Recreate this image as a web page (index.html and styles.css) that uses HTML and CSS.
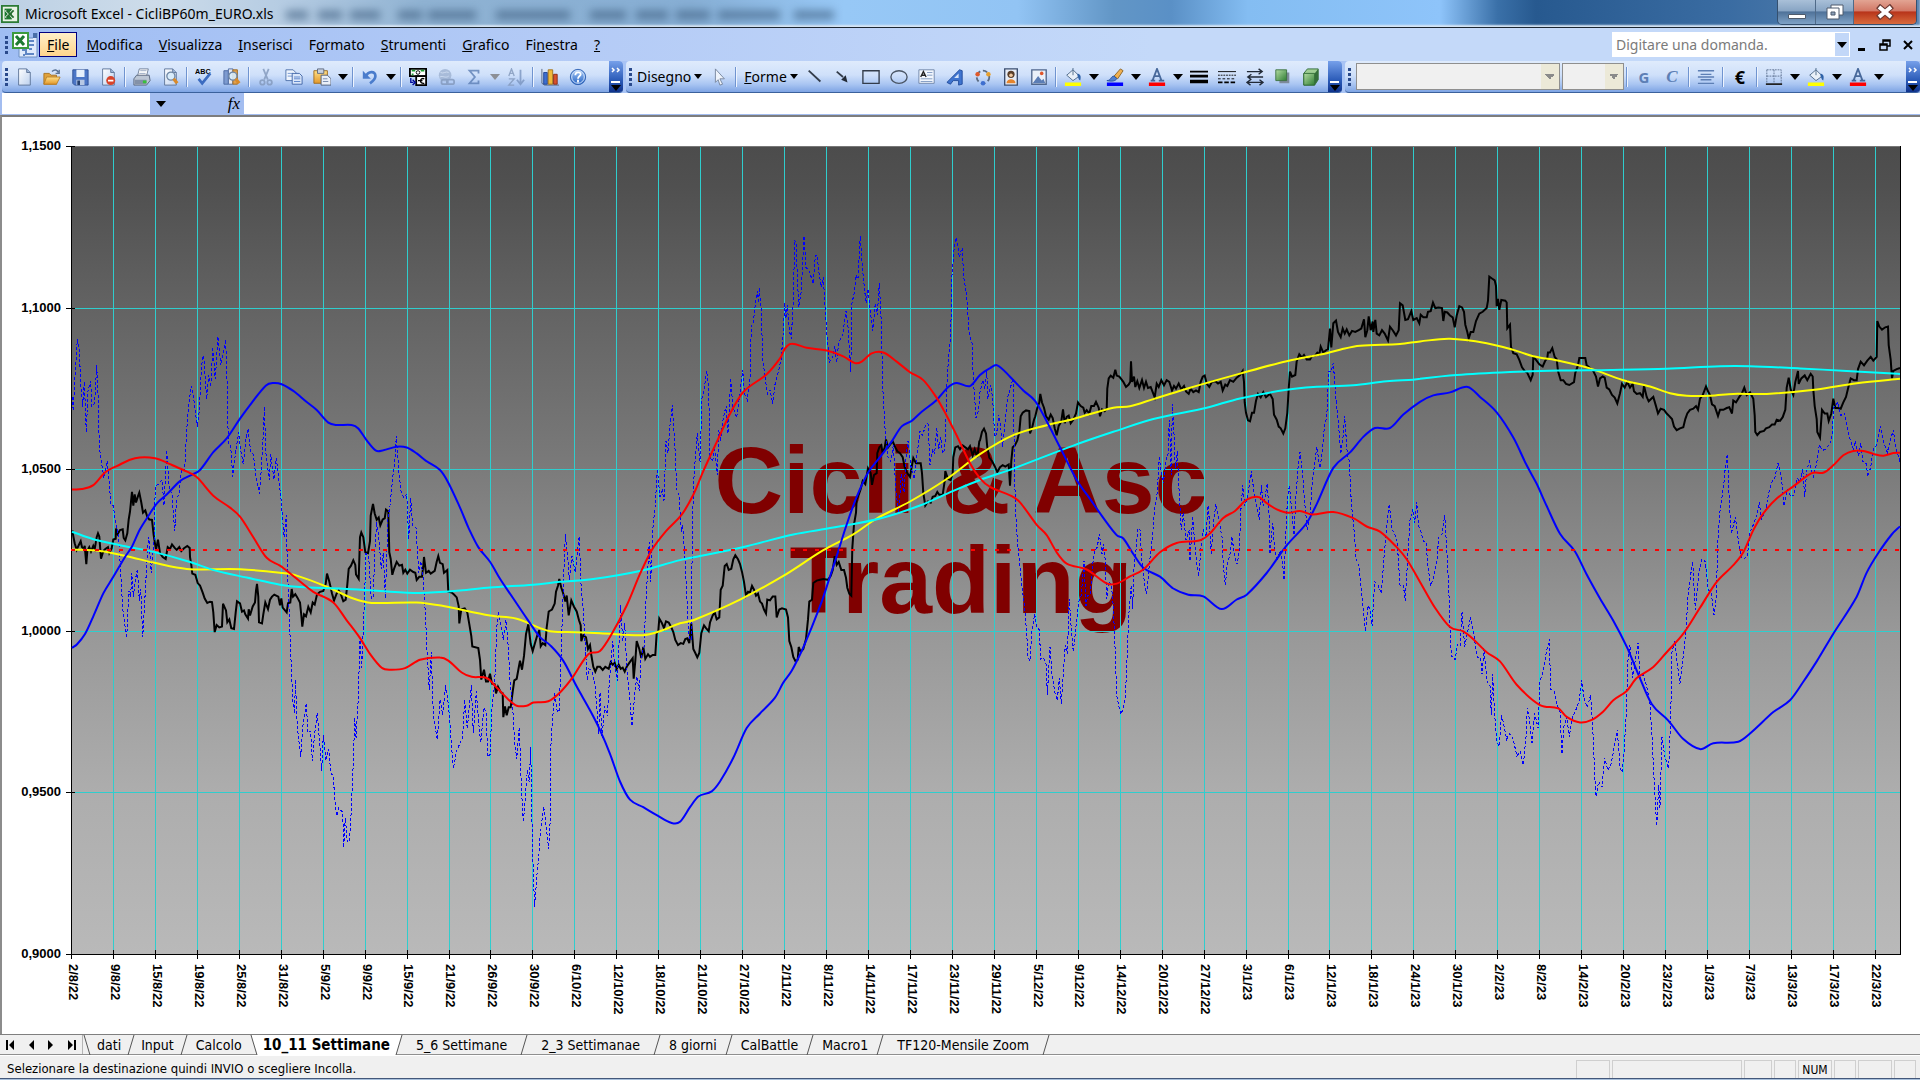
FILE: index.html
```html
<!DOCTYPE html>
<html lang="it">
<head>
<meta charset="utf-8">
<title>Microsoft Excel - CicliBP60m_EURO.xls</title>
<link rel="stylesheet" href="styles.css">
</head>
<body>
<svg class="defs" aria-hidden="true">
  <defs>
    <linearGradient id="g-page" x1="0" y1="0" x2="1" y2="1"><stop offset="0" stop-color="#fff"/><stop offset="1" stop-color="#bcd0ee"/></linearGradient>
    <linearGradient id="g-green" x1="0" y1="0" x2="1" y2="1"><stop offset="0" stop-color="#b4dda4"/><stop offset="1" stop-color="#2f7d33"/></linearGradient>
    <linearGradient id="g-help" x1="0" y1="0" x2="0" y2="1"><stop offset="0" stop-color="#a9cbf7"/><stop offset="1" stop-color="#2261c4"/></linearGradient>
    <linearGradient id="g-gold" x1="0" y1="0" x2="0" y2="1"><stop offset="0" stop-color="#ffdf86"/><stop offset="1" stop-color="#e3982a"/></linearGradient>
    <symbol id="i-drop" viewBox="0 0 10 6"><path d="M0 0h10L5 6z" fill="currentColor"/></symbol>
    <symbol id="i-page" viewBox="0 0 20 20"><path d="M4 1h9l4 4v14H4z" fill="url(#g-page)" stroke="#5b7396"/><path d="M13 1v4h4" fill="#9db6da" stroke="#5b7396"/></symbol>
    <symbol id="i-lens" viewBox="0 0 20 20"><circle cx="11" cy="9" r="4.5" fill="#d8ecfb" fill-opacity=".9" stroke="#6f87a5" stroke-width="1.5"/><path d="m14 12 4 5" stroke="#d98a2a" stroke-width="3.5"/></symbol>
    <symbol id="i-bucket" viewBox="0 0 20 20"><path d="m3 8 7-6 7 7-7 5z" fill="#e9f0f8" stroke="#4b6686"/><path d="M10 2V0M10 2v6" stroke="#4b6686"/><path d="M15 6c4 1 4 4 3 8-2-1-2-3-3-5z" fill="#2f62a8"/><path d="M1 16h18v4H1z" fill="#ff0"/></symbol>
    <symbol id="i-fontcolor" viewBox="0 0 20 20"><path d="M5 14 10 1l5 13M7 9h6M3 14h5M12 14h6" fill="none" stroke="#47689a" stroke-width="2"/><path d="M1 16h18v4H1z" fill="red"/></symbol>
  </defs>
</svg>

<div class="window">
  <header class="titlebar">
    <svg class="app-icon" viewBox="0 0 20 20"><path d="M1 1h18v18H1z" fill="#e9f3e6" stroke="#2b7a35" stroke-width="2"/><path d="M4 4h8v12H4z" fill="#1c7a30"/><path d="m5 6 8 8M13 6l-8 8" stroke="#fff" stroke-width="2"/><path d="m6 6 8 8M14 6l-8 8" stroke="#236b2e" stroke-width="2"/></svg>
    <h1 class="title">Microsoft Excel - CicliBP60m_EURO.xls</h1>
    <svg class="glass-marks" viewBox="0 0 560 28" aria-hidden="true"><path d="M0 15h22M32 15h24M64 15h30M112 15h24M142 15h48M210 15h74M304 15h36M350 15h32M390 15h34M432 15h62M508 15h40" stroke="#3a5a7c" stroke-width="9"/></svg>
    <div class="win-buttons">
      <button class="win" aria-label="Riduci a icona"><svg viewBox="0 0 20 16"><path d="M1.500 10.500h17v4h-17z" fill="#fff" stroke="#4e5b6c"/></svg></button>
      <button class="win" aria-label="Ripristino"><svg viewBox="0 0 20 16"><path d="M6 1h12v10H6z" fill="#fff" stroke="#4e5b6c"/><path d="M2 4h12v11H2z" fill="#fff" stroke="#4e5b6c"/><path d="M6 8h4v3H6z" fill="#8ba0b8" stroke="#4e5b6c"/></svg></button>
      <button class="win win-close" aria-label="Chiudi"><svg viewBox="0 0 20 16"><path d="m3 2 14 12M17 2 3 14" stroke="#6b3a33" stroke-width="6"/><path d="m4 3 12 10M16 3 4 13" stroke="#fff" stroke-width="4"/></svg></button>
    </div>
  </header>

  <nav class="menubar">
    <span class="grip"></span>
    <svg class="doc-icon" viewBox="0 0 26 26"><path d="M7 6h14l4-5v24H7z" fill="#dfeafb" stroke="#6d8fc0"/><path d="M10 18h4v4h8M12 22v2M17 9h5M17 13h5M17 17h3" stroke="#5f86c4" stroke-width="2" fill="none"/><path d="M21 1h4v5h-4z" fill="#4a6fa8"/><path d="M1 1h15v15H1z" fill="#fff" stroke="#3c9a3e" stroke-width="2"/><path d="m4 4 8 9M12 4l-8 9" stroke="#1f7a33" stroke-width="3"/></svg>
    <button class="menu menu-on"><u>F</u>ile</button>
    <button class="menu"><u>M</u>odifica</button>
    <button class="menu"><u>V</u>isualizza</button>
    <button class="menu"><u>I</u>nserisci</button>
    <button class="menu">F<u>o</u>rmato</button>
    <button class="menu"><u>S</u>trumenti</button>
    <button class="menu"><u>G</u>rafico</button>
    <button class="menu">Fi<u>n</u>estra</button>
    <button class="menu"><u>?</u></button>
    <div class="ask"><input class="ask-input" type="text" placeholder="Digitare una domanda." aria-label="Digitare una domanda"><button class="ask-drop" aria-label="Domande recenti"><svg><use href="#i-drop"/></svg></button></div>
    <button class="mdi" aria-label="Riduci"><svg viewBox="0 0 12 12"><path d="M2 9h7v3H2z"/></svg></button>
    <button class="mdi" aria-label="Ripristina"><svg viewBox="0 0 12 12"><path d="M4 5V1h7v6H8M4 2h7M1 5h7v6H1zM1 6h7" fill="none" stroke="#000" stroke-width="1.500"/></svg></button>
    <button class="mdi" aria-label="Chiudi cartella"><svg viewBox="0 0 12 12"><path d="m2 2 8 8M10 2l-8 8" stroke="#000" stroke-width="2"/></svg></button>
  </nav>

  <div class="toolbars">
    <div class="toolbar tb-standard">
      <span class="grip"></span>
      <button class="tool" aria-label="Nuovo"><svg viewBox="0 0 20 20"><use href="#i-page"/></svg></button>
      <button class="tool" aria-label="Apri"><svg viewBox="0 0 20 20"><path d="M1 6h6l2 2h6v10H1z" fill="#e0a23c" stroke="#a8701c"/><path d="M4 10h15l-4 8H1z" fill="url(#g-gold)" stroke="#b8802a"/><path d="M10 4c3-3 6-2 7 1M18 2v4h-4" fill="none" stroke="#5b7396" stroke-width="1.500"/></svg></button>
      <button class="tool" aria-label="Salva"><svg viewBox="0 0 20 20"><path d="M2 2h17v17H4l-2-2z" fill="#4c76c6" stroke="#2e4f94"/><path d="M6 2h9v8H6z" fill="#e6effb"/><path d="M6 13h9v6H6z" fill="#b7c8e4"/><path d="M7 14h3v5H7z" fill="#26406f"/></svg></button>
      <button class="tool" aria-label="Autorizzazione"><svg viewBox="0 0 20 20"><use href="#i-page"/><circle cx="13" cy="14" r="5" fill="#d8432a"/><path d="M10 14h6" stroke="#fff" stroke-width="2"/></svg></button>
      <span class="sep"></span>
      <button class="tool" aria-label="Stampa"><svg viewBox="0 0 20 20"><path d="M7 1h10l-2 8H5z" fill="#fff" stroke="#6c7c93"/><path d="m8 3h7M7 6h7" stroke="#93a4bd"/><path d="M4 8h14l1 6-4 5H1v-7z" fill="#bcc6d4" stroke="#56637a"/><path d="M2 13h13v5H2z" fill="#8391a8"/><path d="M11 14h4v3h-4z" fill="#38c23a"/></svg></button>
      <button class="tool" aria-label="Anteprima di stampa"><svg viewBox="0 0 20 20"><use href="#i-page"/><use href="#i-lens"/></svg></button>
      <span class="sep"></span>
      <button class="tool" aria-label="Controllo ortografia"><svg viewBox="0 0 20 20"><text x="0" y="7" class="abc">ABC</text><path d="m4 12 4 5 9-11" fill="none" stroke="#3c6cc0" stroke-width="3"/></svg></button>
      <button class="tool" aria-label="Ricerche"><svg viewBox="0 0 20 20"><path d="M1 3h5v15H1z" fill="#7d9bd0" stroke="#4a68a0"/><path d="M6 1h5v17H6z" fill="#e6e9f2" stroke="#4a68a0"/><path d="M11 2h5v16h-5z" fill="#e2a04a" stroke="#9a6a24"/><use href="#i-lens"/></svg></button>
      <span class="sep"></span>
      <button class="tool off" aria-label="Taglia"><svg viewBox="0 0 20 20"><path d="m7 1 5 12M13 1 8 13" stroke="#8298bb" stroke-width="2"/><circle cx="6" cy="16" r="2.500" fill="none" stroke="#8298bb" stroke-width="2"/><circle cx="14" cy="16" r="2.500" fill="none" stroke="#8298bb" stroke-width="2"/></svg></button>
      <button class="tool" aria-label="Copia"><svg viewBox="0 0 20 20"><path d="M1 2h8l3 3v9H1z" fill="#eef4fd" stroke="#4b6ea9"/><path d="M3 6h6M3 9h6" stroke="#6f93cf"/><path d="M8 6h8l3 3v9H8z" fill="#dbe7fa" stroke="#3c62a5"/><path d="M10 10h7M10 12h7M10 15h7" stroke="#5680c8"/></svg></button>
      <button class="tool" aria-label="Incolla"><svg viewBox="0 0 20 20"><path d="M1 3h15v14H1z" fill="url(#g-gold)" stroke="#9c6a1e"/><path d="M5 1h7v5H5z" fill="#c7d0de" stroke="#5c687c"/><path d="M9 8h7l4 4v7H9z" fill="#e9eff8" stroke="#4c5c78"/><path d="M11 12h5M11 15h6" stroke="#7085a8"/></svg></button>
      <button class="tool-drop" aria-label="Opzioni incolla"><svg><use href="#i-drop"/></svg></button>
      <span class="sep"></span>
      <button class="tool" aria-label="Annulla"><svg viewBox="0 0 20 20"><path d="M5 10C8 3 16 3 16 9c0 4-3 6-6 8" fill="none" stroke="#4a7ccc" stroke-width="3"/><path d="M2 3v9h9z" fill="#4a7ccc"/></svg></button>
      <button class="tool-drop" aria-label="Elenco annulla"><svg><use href="#i-drop"/></svg></button>
      <span class="sep"></span>
      <button class="tool" aria-label="Conversione in euro"><svg viewBox="0 0 20 20"><path d="M1 1h18v8H1z" fill="#fff" stroke="#000" stroke-width="2"/><path d="M3 3h4M13 3h4M3 7h2" stroke="#1d9a32" stroke-width="2"/><circle cx="10" cy="5" r="2" fill="none" stroke="#000"/><path d="M8 9h11v10H8z" fill="#fff" stroke="#000" stroke-width="2"/><path d="M17 12c-5-2-6 6 0 5M10 14h5" fill="none" stroke="#000" stroke-width="1.500"/><path d="M2 11v5h3M4 13l3 3-3 3" fill="none" stroke="#000a9a" stroke-width="1.500"/></svg></button>
      <button class="tool off" aria-label="Collegamento ipertestuale"><svg viewBox="0 0 20 20"><circle cx="9" cy="8" r="7" fill="#9fb3d2"/><path d="M4 5c3 2 6-2 9 0M3 10c4-2 6 2 10-1" stroke="#cfdcf0" fill="none"/><rect x="5" y="13" width="7" height="5" rx="2" fill="none" stroke="#8298bb" stroke-width="2"/><rect x="11" y="13" width="8" height="5" rx="2" fill="none" stroke="#8298bb" stroke-width="2"/></svg></button>
      <button class="tool off" aria-label="Somma automatica"><svg viewBox="0 0 20 20"><path d="M15 6V3H5l6 7-6 7h10v-3" fill="none" stroke="#5d7fb5" stroke-width="2"/></svg></button>
      <button class="tool-drop off-drop" aria-label="Altre funzioni"><svg><use href="#i-drop"/></svg></button>
      <button class="tool off" aria-label="Ordinamento crescente"><svg viewBox="0 0 20 20"><path d="m2 9 3-8 3 8M3 6h4M2 12h6l-6 7h6" fill="none" stroke="#8298bb" stroke-width="1.500"/><path d="M15 2v15M11 13l4 5 4-5" fill="none" stroke="#7b95c0" stroke-width="2"/></svg></button>
      <span class="sep"></span>
      <button class="tool" aria-label="Creazione guidata Grafico"><svg viewBox="0 0 20 20"><path d="M1 1v16l3 2h16" fill="none" stroke="#56637a"/><path d="M3 5h4v13H3z" fill="#3e6fd0" stroke="#1f4594"/><path d="M8 2h5v16H8z" fill="#f0b93a" stroke="#a0701a"/><path d="M14 7h4v11h-4z" fill="#d8512c" stroke="#8a2a14"/></svg></button>
      <button class="tool" aria-label="Guida"><svg viewBox="0 0 20 20"><circle cx="10" cy="10" r="8.500" fill="url(#g-help)" stroke="#2a5db0"/><circle cx="10" cy="10" r="7" fill="none" stroke="#dbe9fc"/><path d="M7 8c0-4 6-4 6-1 0 2-3 2-3 5M10 13v3" fill="none" stroke="#fff" stroke-width="2"/></svg></button>
      <button class="more" aria-label="Opzioni barra degli strumenti standard"><svg viewBox="0 0 14 30"><path d="m3 6 2 2-2 2M8 6l2 2-2 2" fill="none" stroke="#fff" stroke-width="1.500"/><path d="M2 20h9" stroke="#fff" stroke-width="2"/><path d="M2 23h10l-5 6z" fill="#000"/></svg></button>
    </div>
    <div class="toolbar tb-drawing">
      <span class="grip"></span>
      <button class="tool-text"><span>Dise<u>g</u>no</span><svg><use href="#i-drop"/></svg></button>
      <button class="tool" aria-label="Seleziona oggetti"><svg viewBox="0 0 20 20"><path d="m6 1 10 11h-5l3 6-3 1-2-6-3 3z" fill="#eef3fb" stroke="#74839b"/></svg></button>
      <span class="sep"></span>
      <button class="tool-text"><span><u>F</u>orme</span><svg><use href="#i-drop"/></svg></button>
      <button class="tool" aria-label="Linea"><svg viewBox="0 0 20 20"><path d="m3 3 13 12" stroke="#333c4a" stroke-width="2"/></svg></button>
      <button class="tool" aria-label="Freccia"><svg viewBox="0 0 20 20"><path d="m3 4 7 6" stroke="#333c4a" stroke-width="2"/><path d="m15 16-2-8-5 5z" fill="#222a36"/></svg></button>
      <button class="tool" aria-label="Rettangolo"><svg viewBox="0 0 20 20"><path d="M1 3h18v14H1z" fill="none" stroke="#333c4a" stroke-width="1.500"/></svg></button>
      <button class="tool" aria-label="Ovale"><svg viewBox="0 0 20 20"><ellipse cx="10" cy="10" rx="9" ry="7" fill="none" stroke="#4a5565" stroke-width="1.500"/></svg></button>
      <button class="tool" aria-label="Casella di testo"><svg viewBox="0 0 20 20"><path d="M1 2h17v15H1z" fill="#f1f6fd" stroke="#6d83a6"/><path d="m3 10 3-6 3 6M4 8h4" fill="none" stroke="#222" stroke-width="1.500"/><path d="M10 5h6M10 8h6M3 12h13M3 15h13" stroke="#7d97c0"/></svg></button>
      <button class="tool" aria-label="WordArt"><svg viewBox="0 0 20 20"><path d="M1 16 15 2l3 1v15l-4 1v-5H8l-3 4z" fill="#3f74cf" stroke="#1f4a9a"/><path d="M9 11h5V6z" fill="#d5e3f8"/></svg></button>
      <button class="tool" aria-label="Diagramma"><svg viewBox="0 0 20 20"><circle cx="10" cy="10" r="7" fill="none" stroke="#5b6b82" stroke-width="2" stroke-dasharray="5 3"/><circle cx="4" cy="7" r="2.500" fill="#e05a2b"/><circle cx="16" cy="7" r="2.500" fill="#e7a02e"/><circle cx="10" cy="17" r="2.500" fill="#3e6fd0"/></svg></button>
      <button class="tool" aria-label="ClipArt"><svg viewBox="0 0 20 20"><path d="M3 1h14v18H3z" fill="#e6ecf6" stroke="#3c4f70" stroke-width="1.500"/><circle cx="10" cy="7" r="4" fill="#5a3f2a"/><circle cx="10" cy="8" r="2" fill="#f0c9a0"/><path d="M5 17c0-6 10-6 10 0z" fill="#e6842b"/></svg></button>
      <button class="tool" aria-label="Immagine"><svg viewBox="0 0 20 20"><path d="M2 2h16v16H2z" fill="#eaf0f9" stroke="#4f668c" stroke-width="1.500"/><circle cx="13" cy="6" r="2" fill="#e0562b"/><path d="m3 17 6-8 4 5 2-2 2 5z" fill="#5b7db5"/></svg></button>
      <span class="sep"></span>
      <button class="tool" aria-label="Colore riempimento"><svg viewBox="0 0 20 20"><use href="#i-bucket"/></svg></button>
      <button class="tool-drop" aria-label="Altri colori riempimento"><svg><use href="#i-drop"/></svg></button>
      <button class="tool" aria-label="Colore linea"><svg viewBox="0 0 20 20"><path d="m9 9 7-8 3 2-6 9z" fill="#f0b050" stroke="#8a6224"/><path d="M1 14c5 0 4-5 8-5l3 3c-2 3-6 3-11 2z" fill="#4f7fd0" stroke="#2a529c"/><path d="M1 16h18v4H1z" fill="#00f"/></svg></button>
      <button class="tool-drop" aria-label="Altri colori linea"><svg><use href="#i-drop"/></svg></button>
      <button class="tool" aria-label="Colore carattere"><svg viewBox="0 0 20 20"><use href="#i-fontcolor"/></svg></button>
      <button class="tool-drop" aria-label="Altri colori carattere"><svg><use href="#i-drop"/></svg></button>
      <button class="tool" aria-label="Stile linea"><svg viewBox="0 0 20 20"><path d="M0 4h20" stroke="#000" stroke-width="2"/><path d="M0 9h20" stroke="#000" stroke-width="3"/><path d="M0 15h20" stroke="#000" stroke-width="4"/></svg></button>
      <button class="tool" aria-label="Stile tratteggio"><svg viewBox="0 0 20 20"><path d="M0 4h20" stroke="#000"/><path d="M0 8h20" stroke="#000" stroke-dasharray="2 1"/><path d="M0 12h20" stroke="#000" stroke-dasharray="3 2"/><path d="M0 16h20" stroke="#000" stroke-width="2" stroke-dasharray="5 2"/></svg></button>
      <button class="tool" aria-label="Stile freccia"><svg viewBox="0 0 20 20"><path d="M1 4h17M14 1l4 3-4 3M2 10h17M6 7l-4 3 4 3M2 16h16M5 13l-4 3 4 3M15 13l4 3-4 3" fill="none" stroke="#222a36" stroke-width="1.500"/></svg></button>
      <button class="tool" aria-label="Stile ombreggiatura"><svg viewBox="0 0 20 20"><path d="M6 5h11v12H6z" fill="#7d8a9b"/><path d="M2 2h12v12H2z" fill="url(#g-green)" stroke="#3b7040"/></svg></button>
      <button class="tool" aria-label="Stile 3D"><svg viewBox="0 0 20 20"><path d="m2 6 4-5h12v12l-4 6H2z" fill="#9fce94" stroke="#2f6b35"/><path d="M14 6l4-5v12l-4 6z" fill="#356f3a"/><path d="M2 6h12v13H2z" fill="url(#g-green)" stroke="#2f6b35"/></svg></button>
      <button class="more" aria-label="Opzioni barra Disegno"><svg viewBox="0 0 14 30"><path d="M2 20h9" stroke="#fff" stroke-width="2"/><path d="M2 23h10l-5 6z" fill="#000"/></svg></button>
    </div>
    <div class="toolbar tb-format">
      <span class="grip"></span>
      <select class="combo combo-font" aria-label="Tipo di carattere" disabled><option></option></select>
      <select class="combo combo-size" aria-label="Dimensione carattere" disabled><option></option></select>
      <span class="sep"></span>
      <button class="tool letter bold">G</button>
      <button class="tool letter italic">C</button>
      <span class="sep"></span>
      <button class="tool" aria-label="Allinea al centro"><svg viewBox="0 0 20 20"><path d="M1 3h18M4 7h12M1 10h18M4 13h12M1 17h18" stroke="#5d7fb5" stroke-width="1.500"/></svg></button>
      <span class="sep"></span>
      <button class="tool letter euro">€</button>
      <span class="sep"></span>
      <button class="tool" aria-label="Bordi"><svg viewBox="0 0 20 20"><path d="M2 2h16v15M2 2v15M10 2v15M2 9h16" fill="none" stroke="#5c6f8e" stroke-dasharray="2 1"/><path d="M1 18h18" stroke="#222" stroke-width="2"/></svg></button>
      <button class="tool-drop" aria-label="Altri bordi"><svg><use href="#i-drop"/></svg></button>
      <button class="tool" aria-label="Riempimento celle"><svg viewBox="0 0 20 20"><use href="#i-bucket"/></svg></button>
      <button class="tool-drop" aria-label="Altri riempimenti"><svg><use href="#i-drop"/></svg></button>
      <button class="tool" aria-label="Colore testo"><svg viewBox="0 0 20 20"><use href="#i-fontcolor"/></svg></button>
      <button class="tool-drop" aria-label="Altri colori testo"><svg><use href="#i-drop"/></svg></button>
      <button class="more" aria-label="Opzioni barra Formattazione"><svg viewBox="0 0 14 30"><path d="m3 6 2 2-2 2M8 6l2 2-2 2" fill="none" stroke="#fff" stroke-width="1.500"/><path d="M2 20h9" stroke="#fff" stroke-width="2"/><path d="M2 23h10l-5 6z" fill="#000"/></svg></button>
    </div>
  </div>

  <div class="formula-bar">
    <input class="name-box" type="text" aria-label="Casella Nome">
    <button class="name-drop" aria-label="Elenco nomi"><svg><use href="#i-drop"/></svg></button>
    <button class="fx"><i>fx</i></button>
    <input class="formula" type="text" aria-label="Barra della formula">
  </div>

  <main class="sheet">
    <ol class="axis-y"><li>1,1500</li><li>1,1000</li><li>1,0500</li><li>1,0000</li><li>0,9500</li><li>0,9000</li></ol>
    <div class="plot"><svg class="plot-lines" id="plot" viewBox="0 0 1829 808" preserveAspectRatio="none" role="img" aria-label="Cicli EURO, 10-11 settimane"></svg></div>
    <ol class="axis-x" id="dates"></ol>
    <p class="watermark">Cicli &amp; Asc<br>Trading</p>
  </main>

  <div class="tabbar">
    <div class="tab-nav">
      <button aria-label="Primo foglio"><svg viewBox="0 0 12 12"><path d="M2 1h2v10H2zM10 1v10L5 6z"/></svg></button>
      <button aria-label="Foglio precedente"><svg viewBox="0 0 12 12"><path d="M9 1v10L4 6z"/></svg></button>
      <button aria-label="Foglio successivo"><svg viewBox="0 0 12 12"><path d="M3 1v10l5-5z"/></svg></button>
      <button aria-label="Ultimo foglio"><svg viewBox="0 0 12 12"><path d="M2 1v10l5-5zM8 1h2v10H8z"/></svg></button>
    </div>
    <svg class="edge" viewBox="0 0 8 20"><path d="m1 0 6 20" stroke="#555" fill="none"/></svg>
    <button class="tab">dati</button>
    <svg class="edge" viewBox="0 0 8 20"><path d="m7 0-6 20" stroke="#555"/></svg>
    <button class="tab">Input</button>
    <svg class="edge" viewBox="0 0 8 20"><path d="m7 0-6 20" stroke="#555"/></svg>
    <button class="tab tab-mid">Calcolo</button>
    <svg class="edge" viewBox="0 0 8 20"><path d="M1 0h7v20H7z" fill="#fff"/><path d="m1 0 6 20" stroke="#555"/></svg>
    <button class="tab tab-on">10_11 Settimane</button>
    <svg class="edge" viewBox="0 0 8 20"><path d="M0 0h7L1 20H0z" fill="#fff"/><path d="m7 0-6 20" stroke="#555"/></svg>
    <button class="tab tab-wide">5_6 Settimane</button>
    <svg class="edge" viewBox="0 0 8 20"><path d="m7 0-6 20" stroke="#555"/></svg>
    <button class="tab tab-wide">2_3 Settimanae</button>
    <svg class="edge" viewBox="0 0 8 20"><path d="m7 0-6 20" stroke="#555"/></svg>
    <button class="tab tab-mid">8 giorni</button>
    <svg class="edge" viewBox="0 0 8 20"><path d="m7 0-6 20" stroke="#555"/></svg>
    <button class="tab tab-mid">CalBattle</button>
    <svg class="edge" viewBox="0 0 8 20"><path d="m7 0-6 20" stroke="#555"/></svg>
    <button class="tab tab-mid">Macro1</button>
    <svg class="edge" viewBox="0 0 8 20"><path d="m7 0-6 20" stroke="#555"/></svg>
    <button class="tab tab-wide">TF120-Mensile Zoom</button>
    <svg class="edge" viewBox="0 0 8 20"><path d="m7 0-6 20" stroke="#555"/></svg>
  </div>

  <footer class="status">
    <span class="status-text">Selezionare la destinazione quindi INVIO o scegliere Incolla.</span>
    <span class="cell cell-m"></span><span class="cell cell-l"></span><span class="cell"></span><span class="cell cell-s"></span><span class="cell cell-m">NUM</span><span class="cell cell-s"></span><span class="cell cell-m"></span><span class="cell cell-s"></span>
  </footer>
  <div class="taskbar"></div>
</div>
<script src="chart.js"></script>
</body>
</html>
```
FILE: styles.css
```css
* { box-sizing: border-box; }
body { margin: 0; font-family: "Noto Sans", "Open Sans", sans-serif; font-size: 14px; color: #000; }
button, input, select { font: inherit; color: inherit; margin: 0; padding: 0; border: 0; background: none; border-radius: 0; }
ol { list-style: none; margin: 0; padding: 0; }
.defs { position: absolute; width: 0; height: 0; }
.window { display: flex; flex-direction: column; min-height: 100vh; background: #f0f0f0; }

.titlebar { display: flex; align-items: center; height: 28px; padding-left: 1px; overflow: hidden; border-bottom: 1px solid #1c2733;
  background: linear-gradient(90deg, #bcd0e4 0, #cddcea 8%, #b4cbe2 15%, #8fb2d2 22%, #86aed4 36%, #97c8f6 44%, #92c4f4 53%, #6296c6 58%, #5a90c6 61%, #84bdf2 65%, #8ec4fa 75%, #3a70a8 78%, #27598f 80%, #3a6ca2 90%, #5d86b2 100%);
  box-shadow: inset 0 -2px 2px #d8e6f4; }
.app-icon { width: 18px; height: 18px; }
.title { margin: 0 0 0 6px; font-size: 14px; font-weight: 400; white-space: nowrap; }
.glass-marks { width: 560px; height: 28px; margin-left: 12px; filter: blur(4px); opacity: .6; }
.win-buttons { display: flex; align-self: flex-start; height: 25px; margin-left: auto; margin-right: 3px; border: 1px solid #35506f; border-top: 0; border-radius: 0 0 5px 5px; overflow: hidden; }
.win { width: 38px; border-right: 1px solid #4f6a88; background: linear-gradient(#a9c0d8 0, #88a5c4 45%, #4f7299 50%, #7fa2c6 100%); }
.win svg { width: 20px; height: 16px; display: block; margin: auto; }
.win-close { width: 62px; border-right: 0; background: linear-gradient(#e2a493 0, #d27866 45%, #b8341a 50%, #d86a3c 100%); }

.menubar { display: flex; align-items: center; height: 33px; padding-left: 5px; background: linear-gradient(90deg, #9fbdf3, #b4cbf6 30%, #c4d9f9 60%); }
.grip { flex: none; width: 3px; height: 18px; background: repeating-linear-gradient(#2a4a8c 0 3px, transparent 3px 5px); }
.doc-icon { width: 26px; height: 26px; margin: 0 1px 0 4px; }
.menu { height: 25px; padding: 0 7px; line-height: 23px; border: 1px solid transparent; }
.menu-on { margin-right: 1px; border-color: #000080; background: linear-gradient(#ffefc8, #ffd58c); }
.ask { display: flex; width: 238px; height: 25px; margin-left: auto; background: #fff; }
.ask-input { flex: 1; min-width: 0; padding: 0 4px; }
.ask-input::placeholder { color: #7b7b7b; opacity: 1; }
.ask-drop { width: 16px; background: #c2d7f8; border: 1px solid #fff; }
.ask-drop svg, .name-drop svg, .tool-drop svg, .tool-text svg { width: 10px; height: 6px; display: block; margin: auto; }
.tool-text svg { width: 8px; height: 5px; }
.mdi { width: 23px; height: 24px; }
.mdi svg { width: 12px; height: 12px; display: block; margin: auto; }
.mdi:last-child { margin-right: 1px; }

.toolbars { display: flex; gap: 3px; height: 32px; padding-left: 2px; background: #a9c4f5; }
.toolbar { display: flex; align-items: center; height: 32px; padding-left: 3px; border-radius: 4px; overflow: hidden; border-bottom: 1px solid #3b619c; background: linear-gradient(#dfebfc 0, #cfe0fa 45%, #a9c5f2 75%, #7ea4e4 100%); }
.tb-standard { flex: 621 1 0; }
.tb-drawing { flex: 716 1 0; }
.tb-format { flex: 575 1 0; }
.tool { flex: none; width: 28px; height: 28px; padding: 0 4px; }
.tool svg { width: 20px; height: 20px; display: block; padding: 1px; }
.grip + .tool { margin-left: 2px; }
.off { opacity: .8; }
.tool-drop { flex: none; width: 14px; height: 28px; }
.off-drop { color: #8c8f96; }
.sep { flex: none; width: 2px; height: 20px; margin: 0 2px; background: linear-gradient(90deg, #7094d0 1px, #eef4fe 1px); }
.tool-text { display: flex; flex: none; align-items: center; height: 28px; padding: 0 3px 0 5px; gap: 3px; }
.abc { font: bold 8px "Liberation Sans", sans-serif; }
.more { width: 14px; height: 32px; margin-left: auto; flex: none; background: linear-gradient(#76a0ea, #2b5bb8 60%, #0d2f88); }
.more svg { width: 14px; height: 30px; display: block; }
.tb-format .more { margin-left: 20px; }
.combo { appearance: none; height: 27px; border: 1px solid #8f8f8f; opacity: 1;
  background: linear-gradient(225deg, transparent 50%, #8a8a8a 50%) no-repeat right 5px top 10px / 5px 5px, linear-gradient(135deg, transparent 50%, #8a8a8a 50%) no-repeat right 10px top 10px / 5px 5px, linear-gradient(#ece9d8, #ece9d8) no-repeat right / 18px 100%, #f0f0f0;
  background: linear-gradient(135deg, #8a8a8a 50%, transparent 50%) no-repeat right 4px top 10px / 5px 5px, linear-gradient(225deg, #8a8a8a 50%, transparent 50%) no-repeat right 9px top 10px / 5px 5px, linear-gradient(#ece9d8, #ece9d8) no-repeat right / 18px 100%, #f0f0f0; }
.combo-font { flex: 1; min-width: 0; margin: 0 2px 0 5px; }
.combo-size { flex: none; width: 62px; }
.letter { color: #5d7fb5; font-weight: 700; font-size: 15px; }
.italic { font-family: "Liberation Serif", serif; font-style: italic; font-size: 17px; }
.euro { color: #000; font-size: 18px; }

.formula-bar { display: flex; height: 22px; padding: 0 0 1px 2px; background: #a3bdf0; }
.name-box { width: 148px; background: #fff; }
.name-drop { width: 22px; }
.fx { width: 72px; padding-right: 4px; text-align: right; font: 17px "Liberation Serif", serif; }
.formula { flex: 1; background: #fff; }

.sheet { position: relative; flex: 1; display: grid; grid-template-columns: 69px 1fr 20px; grid-template-rows: 29px 1fr 80px; border-top: 2px solid #7d7d7d; border-left: 2px solid #8c8c8c; background: #fff; font: bold 13px/20px "Liberation Sans", sans-serif; }
.axis-y { grid-area: 2 / 1; display: flex; flex-direction: column; justify-content: space-between; margin: -10px 0; padding-right: 10px; text-align: right; }
.plot { grid-area: 2 / 2; background: linear-gradient(#4c4c4c 0, #505050 5%, #636363 20%, #787878 38%, #989898 60%, #adadad 80%, #b9b9b9 100%); }
.plot-lines { position: relative; z-index: 1; display: block; width: 100%; height: 100%; overflow: visible; }
.plot-lines * { fill: none; vector-effect: non-scaling-stroke; }
.grid { stroke: #2fcdcd; stroke-width: 1; shape-rendering: crispEdges; }
.frame { stroke: #777; stroke-width: 1; shape-rendering: crispEdges; }
.axis { stroke: #000; stroke-width: 1; shape-rendering: crispEdges; }
.mean { stroke: #f00; stroke-width: 2; stroke-dasharray: 4 8; shape-rendering: crispEdges; }
.price { stroke: #000; stroke-width: 2; }
.cyan { stroke: #0ff; stroke-width: 2; }
.yellow { stroke: #ff0; stroke-width: 2; }
.red { stroke: #f00; stroke-width: 2; }
.blue { stroke: #00f; stroke-width: 2; }
.fast { stroke: #00f; stroke-width: 1; stroke-dasharray: 3 2; shape-rendering: crispEdges; }
.axis-x { grid-area: 3 / 2; display: flex; margin: 10px -26px 0 -20px; }
.axis-x li { flex: 0 0 calc((100% - 46px) / 43.6); line-height: 40px; writing-mode: vertical-rl; white-space: nowrap; }
.watermark { position: absolute; inset: 0; margin: 0; padding-bottom: 91px; display: flex; align-items: center; justify-content: center; text-align: center; font-size: 95px; line-height: 100px; color: #800000; }

.tabbar { display: flex; height: 21px; border-top: 1px solid #7f7f7f; border-bottom: 1px solid #8f8f8f; font: 14px/18px "DejaVu Sans Condensed", "DejaVu Sans", sans-serif; }
.tab-nav { display: flex; width: 83px; border-right: 1px solid #b5b5b5; }
.tab-nav button { flex: 1; }
.tab-nav svg { width: 12px; height: 12px; display: block; margin: auto; }
.edge { flex: none; width: 8px; height: 20px; }
.tab { padding: 0 6px; white-space: nowrap; }
.tab-mid { padding: 0 8px; }
.tab-wide { padding: 0 13px; }
.tab-on { padding: 0 5px; background: #fff; font-weight: 700; font-size: 15px; height: 20px; }

.status { display: flex; gap: 2px; height: 23px; padding: 4px 4px 0 7px; border-top: 1px solid #fff; font: 12px/18px "DejaVu Sans Condensed", "DejaVu Sans", sans-serif; }
.status-text { flex: 1; font-size: 13px; }
.cell { width: 28px; border: 1px solid #cfcfcf; border-bottom: 0; text-align: center; }
.cell-s { width: 22px; }
.cell-m { width: 34px; }
.cell-l { width: 130px; }
.taskbar { height: 2px; background: #a8c0dc; border-top: 1px solid #44587a; }
```
FILE: chart.js
```javascript
// Each block holds digitised points: "x,y" pairs, with the block's origin and units per plot pixel.
const blocks = [
  { x: 60, y: 300, kx: 3, ky: 2.529,
    price: "37,583 40,597 44,615 50,632 56,620 62,610 66,625 71,630 74,622 79,668 82,635 88,625 93,636 100,622 104,630 110,600 114,590 118,598 123,654 128,640 133,632 139,628 144,625 148,640 155,628 160,606 167,604 168,578 173,592 180,582 188,580 191,602 196,608 202,590 206,555 210,535 216,485 220,520 224,492 228,512 234,496 238,487 244,512 249,538 256,532 262,548 268,555 276,556 281,595 288,632 294,606 300,640 308,650 317,655 323,625 330,630 336,618 344,627 350,632 358,625 364,635 372,628 382,622 389,627 390,650 394,670 397,692 406,695 413,716 420,722 428,740 434,755 442,766 450,763 456,764 460,790 464,840 470,822 478,828 486,826 489,768 498,785 502,815 508,808 514,830 522,832 527,790 531,762 540,767 546,788 552,785 556,795 564,806 566,782 570,798 578,775 585,765 588,735 591,718 595,750 597,815 606,818 610,795 616,765 624,782 630,758 636,750 643,745 650,748 655,750 660,772 664,755 668,778 680,790 684,767 691,765 695,731 699,750 706,744 712,752 720,765 724,797 727,826 732,795 738,800 745,776 752,790 758,765 764,770 771,745 780,738 790,736 797,718 801,692 808,712 816,742 822,760 830,742 836,735 843,745 850,762 857,758 862,720 866,680 873,672 880,658 886,670 888,694 896,705 900,600 904,588 910,600 916,638 924,640 930,610 932,545 939,516 944,540 950,556 956,550 961,570 968,555 974,552 978,530 985,535 988,638 992,655 997,695 1002,680 1010,662 1018,672 1026,670 1030,690 1036,682 1042,692 1050,682 1060,688 1066,690 1070,708 1078,700 1086,700 1090,672 1092,650 1098,690 1106,685 1112,692 1124,685 1130,662 1135,648 1140,665 1148,668 1152,690 1162,683 1165,738 1175,740 1182,745 1190,752 1196,775 1198,818 1204,782 1214,780 1222,790 1228,820 1234,850 1237,876 1255,880 1260,910 1264,960 1272,935 1278,965 1284,965 1290,945 1296,970 1304,972 1308,995 1314,978 1322,992 1328,995 1330,1055 1335,1028 1340,1050 1346,1030 1352,1030 1358,990 1363,962 1370,958 1376,930 1380,912 1386,935 1392,900 1398,845 1405,820 1412,870 1418,888 1426,865 1432,848 1438,835",
    blue: "36,880 52,870 75,845 100,800 130,742 160,700 195,650 215,625 240,580 270,540 290,515 320,492 360,458 395,442 420,430 460,385 500,350 540,300 575,260 618,216 640,210 665,213 700,230 740,258 770,278 805,310 830,316 875,316 895,325 920,355 948,381 970,380 1010,371 1040,373 1070,388 1100,408 1140,430 1165,462 1200,525 1225,575 1255,625 1290,662 1320,705 1360,755 1400,805",
    red: "36,479 65,478 100,468 135,436 170,420 225,400 285,400 330,415 370,430 410,448 460,495 510,525 540,548 580,600 620,652 660,672 700,698 760,738 820,765 860,810 900,855 930,895 965,930 990,935 1035,931 1080,910 1140,904 1165,912 1205,942 1235,953 1280,956 1310,980 1345,1010 1370,1026 1400,1026 1420,1018",
    yellow: "36,631 120,635 200,648 280,664 380,680 540,681 660,690 710,697 800,725 880,755 935,766 1070,765 1150,774 1290,798 1370,806",
    cyan: "36,586 100,605 180,620 280,637 380,660 470,685 560,702 660,720 720,726 850,730 960,736 1080,741 1200,735 1290,727 1420,720",
    fast: "36,245 40,280 46,180 52,100 58,125 62,210 68,270 73,205 79,335 84,230 92,205 96,270 104,260 110,165 114,240 118,370 124,410 132,450 142,408 148,460 152,515 160,520 166,560 176,600 182,690 188,780 200,855 206,735 212,750 215,690 220,750 226,710 232,680 238,760 242,730 248,853 254,765 262,640 266,600 274,690 282,610 286,470 296,465 306,455 312,520 320,380 328,480 336,490 344,585 350,500 358,490 364,430 374,430 380,330 386,265 394,218 402,255 412,322 418,280 424,180 428,140 432,150 440,250 446,190 452,220 458,120 466,200 474,92 482,165 490,130 497,100 502,230 505,360 512,370 518,447 526,390 536,335 542,380 550,415 558,350 564,325 572,385 580,390 588,450 598,490 604,430 610,340 613,270 618,390 628,455 632,390 642,455 649,400 656,450 664,510 672,600 679,545 682,670 688,800 694,930 698,1010 704,1045 706,960 712,1080 722,1155 728,1080 739,1020 744,1095 752,1090 757,1165 764,1095 772,1045 778,1110 785,1190 790,1100 798,1165 806,1135 812,1195 820,1205 824,1260 830,1305 836,1285 848,1295 851,1385 856,1310 862,1370 868,1370 874,1290 880,1170 884,1055 888,1110 894,1020 900,860 905,930 912,790 918,640 926,650 934,755 940,750 944,640 950,562 956,600 964,680 970,640 976,755 984,550 990,520 998,450 1004,410 1009,345 1016,430 1024,490 1032,500 1040,490 1046,605 1052,500 1058,570 1068,575 1076,690 1082,660 1088,690 1096,790 1102,900 1108,985 1114,890 1120,1050 1132,1112 1140,1010 1148,1050 1157,975 1166,1030 1174,1120 1180,1185 1190,1140 1208,1105 1214,1010 1222,1085 1234,975 1240,1095 1249,990 1256,1070 1262,1120 1272,1030 1280,1050 1282,1155 1290,1150 1296,1030 1304,970 1310,830 1315,790 1324,825 1330,860 1338,810 1344,870 1350,960 1358,1030 1364,1120 1370,1160 1378,1080 1384,1230 1390,1320 1396,1260 1402,1190 1408,1220 1412,1130 1416,1320 1420,1450 1424,1535 1430,1460 1437,1400" },
  { x: 500, y: 220, kx: 3, ky: 2.529,
    price: "122,1078 128,1070 136,1075 140,1030 146,990 156,985 164,970 168,940 174,925 178,908 184,930 190,945 196,965 200,950 206,1000 214,962 222,978 230,990 237,1012 242,1025 244,1065 250,1050 258,1055 264,1085 270,1075 274,1100 280,1130 286,1142 292,1130 300,1130 308,1138 316,1130 326,1135 332,1118 338,1125 344,1120 350,1135 356,1125 362,1135 368,1132 374,1142 380,1130 388,1120 398,1108 401,1160 406,1115 410,1065 418,1085 424,1108 430,1080 436,1110 444,1098 450,1105 458,1100 466,1100 470,1045 475,1040 478,1008 486,1020 492,1032 498,1015 506,1018 514,1030 520,1042 526,1062 534,1075 542,1070 550,1072 556,1060 562,1058 568,1070 574,1020 580,1085 586,1095 592,1106 598,1095 604,1045 612,1025 618,1032 626,1040 630,1018 638,1000 644,992 650,1010 658,1005 662,935 668,925 674,875 680,870 686,885 694,882 700,858 706,848 714,858 720,870 726,890 732,915 738,950 744,940 750,942 756,925 762,935 768,950 774,945 780,965 786,970 792,985 798,995 802,960 810,962 818,952 826,952 830,1005 838,985 846,982 858,985 864,1005 868,1065 874,1080 880,1105 886,1115 893,1112 896,1080 902,1092 910,1085 918,1060 924,1010 928,965 936,960 940,918 950,912 960,910 970,908 984,910 992,900 998,885 1004,850 1010,872 1016,865 1024,885 1032,885 1038,905 1042,930 1048,945 1054,950 1057,830 1062,770 1068,740 1070,705 1076,695 1082,680 1088,660 1096,668 1104,628 1112,640 1116,670 1122,645 1130,640 1132,590 1138,575 1144,570 1148,590 1154,575 1158,555 1164,575 1170,568 1178,560 1186,575 1192,585 1200,590 1208,600 1214,625 1222,640 1230,650 1236,620 1240,602 1248,615 1262,615 1266,640 1270,690 1276,722 1284,712 1292,715 1298,700 1306,698 1312,688 1318,695 1328,695 1334,660 1336,635 1344,655 1352,658 1358,640 1360,600 1366,575 1374,572 1380,580 1388,570 1396,575 1404,580 1410,572 1418,595 1424,580 1432,600 1438,560",
    blue: "120,1055 150,1075 190,1115 230,1180 270,1240 300,1290 330,1350 360,1420 390,1466 430,1485 470,1505 515,1525 540,1522 570,1485 595,1458 635,1445 660,1420 700,1360 740,1285 780,1248 825,1208 850,1170 875,1140 905,1090 935,1030 965,965 985,915 1010,850 1040,770 1070,700 1105,638 1140,600 1175,560 1205,522 1235,508 1265,485 1310,455 1345,422 1370,412 1410,420",
    red: "145,1217 180,1195 215,1160 265,1098 300,1090 335,1047 380,975 420,895 455,835 500,785 545,745 580,695 610,635 650,562 690,490 730,435 800,390 840,350 855,325 875,313 920,323 980,330 1030,345 1065,362 1085,358 1115,337 1150,335 1190,358 1230,385 1270,405 1310,450 1340,495 1370,545 1410,615",
    yellow: "120,1032 150,1040 200,1042 300,1045 430,1050 480,1040 540,1020 580,1012 720,960 850,900 970,835 1060,795 1130,755 1230,712 1340,655",
    cyan: "180,915 280,908 420,888 540,860 600,850 740,825 880,795 1000,778 1140,755 1260,722 1360,685",
    fast: "120,1560 131,1483 138,1530 146,1590 150,1530 152,1340 156,1280 164,1195 172,1245 178,1240 184,1080 190,930 196,795 202,840 208,910 216,850 226,890 232,840 238,800 242,910 250,990 256,1080 262,1165 266,1135 276,1140 284,1170 290,1230 296,1300 300,1195 306,1310 314,1230 322,1255 328,1170 338,1065 344,1130 352,1165 358,1060 362,975 368,1065 374,1020 380,1130 390,1220 396,1280 404,1200 410,1155 418,1190 424,1100 432,1080 436,1000 442,900 448,815 452,915 458,785 466,720 472,630 480,700 486,680 492,710 498,560 504,590 510,520 517,467 524,560 530,680 538,700 544,790 548,770 556,870 562,980 568,1060 574,1060 576,870 580,680 586,600 592,540 600,615 606,450 612,430 620,382 626,430 630,600 638,610 644,580 652,645 656,530 662,560 668,510 678,470 684,540 692,400 698,470 710,500 718,450 728,380 734,440 742,455 750,400 754,270 760,260 766,215 772,180 776,210 778,170 784,230 788,350 794,390 802,440 810,430 818,465 826,410 836,380 844,350 850,280 854,210 858,250 862,215 868,280 874,300 880,200 884,50 888,60 892,140 896,220 904,180 912,40 918,120 928,130 940,160 946,90 952,90 956,130 964,170 970,145 976,230 982,300 988,360 996,350 1004,320 1010,360 1016,310 1028,290 1038,230 1044,270 1052,385 1056,210 1064,180 1068,140 1074,150 1081,40 1088,130 1098,210 1104,175 1112,240 1118,280 1126,210 1132,240 1138,160 1144,260 1148,420 1156,540 1164,600 1172,610 1180,570 1188,690 1196,740 1204,640 1212,690 1218,600 1224,560 1232,620 1242,655 1250,600 1260,535 1268,545 1276,520 1284,515 1290,620 1298,580 1304,590 1310,525 1316,580 1322,550 1328,590 1334,580 1338,500 1342,390 1348,330 1352,290 1356,140 1362,75 1368,45 1374,70 1378,95 1386,70 1392,150 1400,190 1408,290 1416,310 1420,400 1428,500 1436,480" },
  { x: 940, y: 220, kx: 3, ky: 2.904,
    price: "120,640 126,615 132,606 138,620 142,660 148,690 156,700 164,715 172,732 180,718 188,712 196,716 206,710 210,772 214,700 218,660 224,655 232,640 238,615 242,570 248,560 258,553 268,555 270,620 276,605 282,580 286,570 292,545 298,530 301,505 306,530 312,545 318,570 326,580 332,565 338,575 344,605 350,625 356,598 364,585 369,550 374,590 380,572 386,568 392,590 400,580 408,562 414,530 422,540 430,545 434,560 440,552 448,562 454,540 462,540 468,528 476,545 480,570 486,550 494,555 500,548 502,490 506,460 512,452 520,458 526,435 530,452 538,455 544,462 550,470 558,485 566,478 571,470 573,410 576,470 582,455 586,485 592,468 598,488 606,465 612,488 618,470 624,488 632,485 638,500 644,515 650,475 656,485 664,465 672,480 680,465 688,470 696,495 702,482 708,490 716,475 724,492 732,482 738,498 746,505 752,490 760,500 768,495 776,500 782,470 788,455 794,452 800,475 808,485 816,470 826,468 834,475 842,470 848,495 856,478 862,482 870,465 880,470 890,458 900,450 908,438 912,470 914,530 918,560 924,582 930,585 936,560 942,560 948,525 954,505 962,515 970,500 978,515 984,510 990,505 998,520 1002,565 1010,580 1016,600 1022,605 1030,620 1036,605 1042,560 1046,490 1050,440 1056,455 1066,450 1070,410 1078,390 1086,400 1092,392 1100,405 1110,405 1116,395 1124,395 1132,385 1138,390 1142,368 1150,385 1158,378 1164,375 1170,315 1174,370 1180,300 1188,292 1194,325 1202,340 1208,315 1214,330 1220,318 1228,335 1236,322 1246,325 1256,320 1264,315 1272,288 1276,340 1282,320 1286,280 1292,320 1298,295 1300,325 1306,290 1310,330 1318,335 1326,320 1334,330 1344,350 1350,310 1358,320 1368,335 1376,320 1380,242 1388,248 1396,290 1404,288 1414,265 1420,290 1430,285 1438,300",
    blue: "120,450 150,430 172,422 210,455 250,495 285,525 315,575 360,660 410,755 450,810 490,865 530,915 550,925 580,970 610,1010 660,1036 700,1070 745,1088 790,1093 845,1130 890,1102 920,1088 980,1025 1040,945 1100,880 1130,825 1180,720 1230,675 1270,630 1305,604 1350,604 1390,565 1440,528",
    red: "120,750 150,775 215,802 240,820 290,885 320,915 350,965 380,998 440,1015 500,1055 530,1056 570,1035 610,1015 660,965 710,938 780,930 810,910 850,865 885,845 920,812 955,804 980,822 1010,840 1045,850 1080,845 1115,855 1180,848 1240,866 1280,890 1320,905 1370,950 1400,985",
    yellow: "120,680 220,625 320,596 400,578 520,545 570,541 640,520 740,490 900,446 1040,410 1160,387 1210,374 1260,365 1380,360",
    cyan: "120,755 220,722 400,655 520,615 640,578 800,545 900,518 1040,493 1120,485 1240,480 1340,468 1420,464",
    fast: "120,500 128,465 134,490 140,440 144,520 152,480 158,520 164,630 170,620 176,565 184,615 188,660 194,600 202,520 210,490 220,460 222,620 226,830 232,930 240,1010 248,1080 254,1130 260,1200 264,1270 270,1280 276,1190 284,1145 290,1180 298,1190 302,1275 310,1270 318,1290 322,1380 330,1240 336,1320 344,1370 352,1395 358,1330 364,1405 370,1320 376,1235 382,1260 388,1100 394,1190 400,1255 408,1180 416,1110 424,1090 432,990 438,1120 444,1090 450,1090 458,1000 464,960 472,950 478,912 486,970 490,940 496,990 500,1100 506,1050 514,1060 520,1120 526,1260 530,1380 536,1410 542,1435 550,1420 556,1385 560,1300 566,1150 574,1060 578,1130 582,1010 588,960 594,895 600,900 606,990 614,1060 620,1085 628,1000 636,930 644,840 652,790 658,685 664,740 670,765 678,700 684,680 688,580 694,740 697,535 702,620 706,720 712,670 718,800 724,900 730,850 738,930 748,900 750,990 758,860 764,940 770,1000 776,1035 784,940 790,900 798,920 804,830 808,870 814,970 820,880 828,825 836,870 846,920 850,1000 856,1060 862,1000 870,970 876,920 884,980 892,1000 898,960 902,850 908,770 914,830 924,800 928,770 934,730 942,790 950,830 958,870 964,770 970,830 976,800 982,765 988,870 990,970 998,880 1004,960 1012,990 1020,960 1028,1000 1032,1045 1038,900 1042,820 1048,770 1056,850 1062,915 1068,800 1074,720 1080,675 1088,740 1094,820 1102,900 1110,850 1118,750 1124,710 1130,660 1140,720 1146,680 1154,590 1160,575 1166,440 1174,440 1180,415 1188,520 1196,600 1202,680 1208,640 1214,570 1222,680 1228,700 1234,820 1242,900 1248,980 1258,1010 1264,1080 1270,1130 1276,1195 1284,1120 1290,1130 1296,1180 1304,1050 1314,1060 1324,1085 1332,980 1340,890 1348,825 1356,900 1364,910 1372,940 1380,1060 1390,1060 1396,1105 1402,1000 1410,870 1418,840 1424,880 1430,820 1436,890" },
  { x: 1400, y: 260, kx: 3, ky: 2.703,
    price: "62,148 70,155 80,155 84,140 92,138 99,115 106,130 116,128 126,130 130,165 134,140 142,142 150,150 158,155 164,182 170,150 178,125 186,128 192,140 196,175 202,195 206,212 212,195 220,195 228,165 238,145 248,140 260,130 264,110 268,45 276,50 284,55 288,70 290,125 294,105 298,135 304,108 316,110 320,115 322,185 330,175 333,235 340,252 350,255 358,270 366,290 374,300 382,305 392,325 398,310 400,262 408,270 418,282 428,288 436,272 442,265 444,250 450,250 457,238 464,262 470,268 474,300 482,325 490,325 498,335 508,338 522,330 526,305 534,285 538,265 556,265 560,285 570,292 580,300 588,315 594,342 600,320 608,315 614,318 620,345 628,350 636,365 644,372 652,388 660,360 666,335 674,345 682,330 690,345 698,335 702,355 710,362 720,360 728,370 732,340 740,370 746,382 754,375 760,370 768,395 774,415 782,402 792,405 800,415 808,422 816,430 822,450 830,460 840,455 850,452 856,430 862,415 870,405 880,402 888,395 894,405 900,375 908,365 918,342 924,355 930,365 936,390 944,395 954,422 960,405 970,405 980,400 988,398 996,415 1000,380 1008,385 1018,370 1026,360 1033,345 1040,365 1050,358 1060,375 1064,420 1066,465 1072,473 1080,465 1092,462 1098,455 1108,452 1116,445 1124,445 1130,432 1140,435 1148,425 1156,405 1160,345 1166,318 1172,350 1180,365 1186,330 1194,300 1196,335 1204,320 1214,312 1222,325 1232,308 1238,315 1240,350 1244,395 1250,430 1252,465 1260,480 1266,405 1274,415 1282,415 1286,435 1294,415 1300,375 1306,400 1314,400 1322,402 1330,385 1338,370 1346,340 1352,320 1362,325 1370,325 1374,295 1382,275 1392,285 1402,272 1412,262 1420,272 1430,262 1432,165 1438,180 1446,188 1456,182 1464,180 1466,230 1472,270 1476,320 1480,300 1490,295 1500,292",
    blue: "100,366 150,358 203,343 240,370 290,412 340,480 380,555 410,605 440,665 480,740 525,788 560,850 600,915 640,975 680,1045 715,1120 755,1200 805,1245 850,1295 900,1322 940,1306 1015,1302 1050,1280 1120,1222 1170,1190 1210,1140 1250,1085 1300,1010 1370,910 1400,845 1435,792 1475,742 1500,720",
    red: "60,870 105,940 150,992 190,1004 220,1025 260,1060 300,1085 350,1148 420,1203 475,1212 500,1235 540,1250 575,1243 610,1220 640,1190 680,1165 710,1130 760,1100 800,1060 850,1010 900,940 950,870 1000,825 1030,790 1060,730 1090,685 1130,645 1180,612 1235,576 1270,575 1300,555 1330,528 1360,516 1390,516 1420,524 1450,529 1480,522 1500,521",
    yellow: "60,220 150,213 260,225 340,243 400,260 480,273 570,293 670,325 750,342 810,360 860,367 930,367 1000,362 1100,362 1250,350 1370,333 1500,321",
    cyan: "60,321 170,311 330,303 480,299 630,297 800,294 960,287 1050,287 1200,293 1340,300 1500,308",
    fast: "60,725 70,760 78,765 84,830 92,880 100,860 110,820 116,750 126,740 134,690 140,780 146,880 150,1000 154,1070 166,1080 172,1040 180,1045 186,950 194,1045 204,1000 212,965 220,1005 232,1075 242,1075 246,1120 252,1050 262,1140 270,1150 274,1230 278,1120 284,1230 290,1300 298,1315 304,1230 310,1250 320,1295 328,1280 340,1295 350,1340 362,1330 370,1365 378,1290 382,1210 388,1240 396,1305 404,1225 414,1265 420,1140 430,1110 440,1055 448,1025 452,1160 462,1165 470,1200 480,1220 486,1335 492,1260 500,1235 508,1290 516,1240 528,1215 538,1190 545,1135 552,1185 562,1210 572,1175 578,1260 584,1390 588,1450 596,1410 606,1425 614,1345 624,1380 634,1360 644,1310 652,1270 660,1370 666,1385 672,1330 678,1240 684,1080 690,1040 698,1130 706,1080 714,1035 720,1130 730,1120 742,1160 750,1200 756,1290 762,1400 770,1530 776,1420 780,1480 786,1290 794,1340 806,1375 812,1240 816,1060 824,1030 832,1090 840,1145 850,1070 858,1000 864,910 872,850 878,815 886,945 896,850 906,808 916,815 924,890 934,900 942,960 950,900 952,780 960,680 972,600 976,560 982,525 990,690 994,740 1006,695 1014,750 1022,800 1030,810 1042,800 1050,735 1058,720 1070,690 1078,655 1084,700 1096,680 1106,630 1116,600 1124,590 1134,550 1144,585 1152,665 1162,620 1172,640 1182,635 1192,590 1200,600 1208,565 1214,640 1220,570 1228,545 1240,585 1250,550 1258,500 1268,515 1278,510 1290,495 1298,470 1300,400 1314,385 1322,420 1334,415 1342,450 1350,485 1360,510 1366,490 1376,530 1382,495 1388,545 1398,550 1404,585 1412,560 1420,510 1430,500 1441,450 1450,490 1462,520 1470,490 1480,460 1488,510 1500,545" }
];

const dates = "2/8/22 9/8/22 15/8/22 19/8/22 25/8/22 31/8/22 5/9/22 9/9/22 15/9/22 21/9/22 26/9/22 30/9/22 6/10/22 12/10/22 18/10/22 21/10/22 27/10/22 2/11/22 8/11/22 14/11/22 17/11/22 23/11/22 29/11/22 5/12/22 9/12/22 14/12/22 20/12/22 27/12/22 3/1/23 6/1/23 12/1/23 18/1/23 24/1/23 30/1/23 2/2/23 8/2/23 14/2/23 20/2/23 23/2/23 1/3/23 7/3/23 13/3/23 17/3/23 22/3/23".split(" ");

const W = 1829, H = 808, LEFT = 71, TOP = 146;
const plot = document.getElementById("plot");

function draw(className, d) {
  const path = document.createElementNS("http://www.w3.org/2000/svg", "path");
  path.setAttribute("class", className);
  path.setAttribute("d", d);
  plot.appendChild(path);
}

function points(name) {
  return blocks.flatMap(b => b[name].split(" ").map(pair => {
    const [x, y] = pair.split(",").map(Number);
    return [b.x + x / b.kx - LEFT, b.y + y / b.ky - TOP];
  }));
}

function jagged(name) {
  draw(name, "M" + points(name).map(p => p[0].toFixed(1) + " " + p[1].toFixed(1)).join("L"));
}

// Moving averages: a cubic through the points, with slopes taken from the neighbours.
function smooth(name) {
  const p = points(name);
  const slope = i => {
    const a = p[Math.max(i - 1, 0)], b = p[Math.min(i + 1, p.length - 1)];
    return (b[1] - a[1]) / (b[0] - a[0]);
  };
  let d = `M${p[0][0].toFixed(1)} ${p[0][1].toFixed(1)}`;
  for (let i = 1; i < p.length; i++) {
    const [x0, y0] = p[i - 1], [x1, y1] = p[i], h = (x1 - x0) / 3;
    d += "C" + [x0 + h, y0 + h * slope(i - 1), x1 - h, y1 - h * slope(i), x1, y1].map(v => v.toFixed(1)).join(" ");
  }
  draw(name, d);
}

const step = W / 43.6;
let grid = "", ticks = "";
dates.forEach((date, i) => {
  const x = Math.round(i * step);
  if (i) grid += `M${x} 0V${H}`;
  ticks += `M${x} ${H - 4}v9`;
  const li = document.createElement("li");
  li.textContent = date;
  document.getElementById("dates").appendChild(li);
});
for (let i = 0; i <= 5; i++) {
  const y = Math.round(i * H / 5);
  if (i && i < 5) grid += `M0 ${y}H${W}`;
  ticks += `M-5 ${y}h9`;
}
draw("grid", grid);
draw("frame", `M0 0H${W}`);
draw("axis", `M0 0V${H}H${W}V0` + ticks);
jagged("price");
jagged("fast");
["yellow", "cyan", "blue", "red"].forEach(smooth);
draw("mean", `M0 404H${W}`);
```
